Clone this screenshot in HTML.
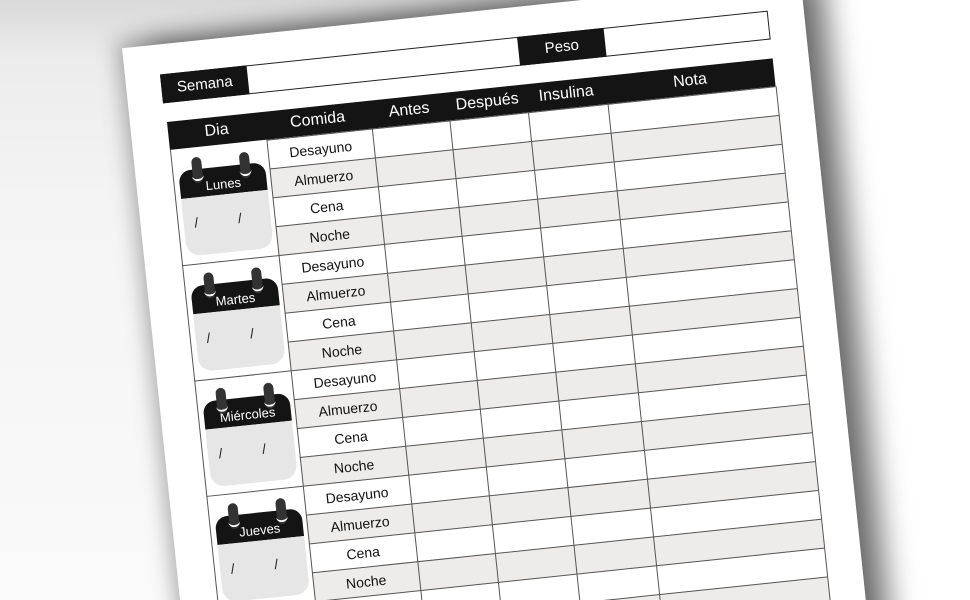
<!DOCTYPE html>
<html style="width:970px;height:600px;overflow:hidden;"><head><meta charset="utf-8"><style>
html,body{margin:0;padding:0;}
body{width:970px;height:600px;overflow:hidden;position:relative;background:#fafafa;font-family:"Liberation Sans",sans-serif;}
#clip{position:absolute;left:0;top:0;width:970px;height:600px;overflow:hidden;background:linear-gradient(180deg,#d9d9d9 0,#ececec 60px,#f4f4f4 200px,#fafafa 600px);}
#rightbg{position:absolute;left:780px;top:0;width:190px;height:600px;background:#fff;}
#w{position:absolute;left:167px;top:122px;transform:rotate(-6deg);transform-origin:0 0;}
.paper{position:absolute;left:-37px;top:-78px;width:682px;height:700px;background:#fff;box-shadow:22px 0 30px rgba(0,0,0,.55),-6px -8px 20px rgba(0,0,0,.25);}
.a{position:absolute;box-sizing:border-box;}
.blk{background:#141414;color:#fff;font-size:15px;display:flex;align-items:center;justify-content:center;}
.hd{position:absolute;top:0;height:28px;color:#fff;font-size:16px;display:flex;align-items:center;justify-content:center;}
.row{position:absolute;left:97px;width:512px;height:29px;border-top:1px solid #555;}
.g{background:#eeecea;}
.vl{position:absolute;top:28px;width:1px;height:540px;background:#555;}
.ct{position:absolute;left:97px;width:106px;height:29px;font-size:14px;color:#111;display:flex;align-items:center;justify-content:center;}
.bl{position:absolute;left:0;width:97px;height:1px;background:#555;}
.cal{position:absolute;left:6px;width:87px;}
.cal .top{position:absolute;left:0;top:0;width:87px;height:28px;background:#141414;border-radius:12px 12px 0 0;color:#fff;font-size:13px;text-align:center;line-height:36px;}
.cal .bot{position:absolute;left:0;top:28px;width:87px;height:58px;background:#e6e6e6;border-radius:0 0 14px 14px;font-size:14px;color:#222;text-align:center;line-height:50px;letter-spacing:18px;}
.ring{position:absolute;top:-12px;width:10px;height:26px;background:#333;border-radius:5px;}
.ring:after{content:"";position:absolute;left:-1px;top:16px;width:12px;height:6px;border-bottom:2px solid #fff;border-radius:0 0 8px 8px;}
</style></head><body>
<div id="clip">
<div id="rightbg"></div>
<div id="w">
<div class="paper"></div>
<div class="a" style="left:-2px;top:-48px;width:611px;height:29px;border:1px solid #222;"></div>
<div class="a blk" style="left:-2px;top:-48px;width:87px;height:29px;">Semana</div>
<div class="a blk" style="left:357px;top:-48px;width:87px;height:29px;">Peso</div>
<div class="a" style="left:0;top:0;width:609px;height:28px;background:#141414;"></div>
<div class="hd" style="left:0;width:97px;">Dia</div>
<div class="hd" style="left:97px;width:106px;">Comida</div>
<div class="hd" style="left:203px;width:78px;">Antes</div>
<div class="hd" style="left:281px;width:79px;">Después</div>
<div class="hd" style="left:360px;width:80px;">Insulina</div>
<div class="hd" style="left:440px;width:169px;">Nota</div>
<div id="rows"></div>
<div class="vl" style="left:0"></div>
<div class="vl" style="left:97px"></div>
<div class="vl" style="left:203px"></div>
<div class="vl" style="left:281px"></div>
<div class="vl" style="left:360px"></div>
<div class="vl" style="left:440px"></div>
<div class="vl" style="left:609px"></div>
</div>
</div>
<script>
var r=document.getElementById('rows'),h='';
var m=['Desayuno','Almuerzo','Cena','Noche'],d=['Lunes','Martes','Miércoles','Jueves','Viernes'];
for(var i=0;i<18;i++){var t=28+i*29;
h+='<div class="row'+(i%2?' g':'')+'" style="top:'+t+'px"></div>';
h+='<div class="ct" style="top:'+t+'px">'+m[i%4]+'</div>';}
for(var b=0;b<5;b++){var t=28+b*116;
if(b>0)h+='<div class="bl" style="top:'+t+'px"></div>';
h+='<div class="cal" style="top:'+(t+22)+'px"><div class="top">'+d[b]+'</div><div class="bot">/ /</div><div class="ring" style="left:14px"></div><div class="ring" style="left:62px"></div></div>';}
r.innerHTML=h;
</script>
</body></html>
